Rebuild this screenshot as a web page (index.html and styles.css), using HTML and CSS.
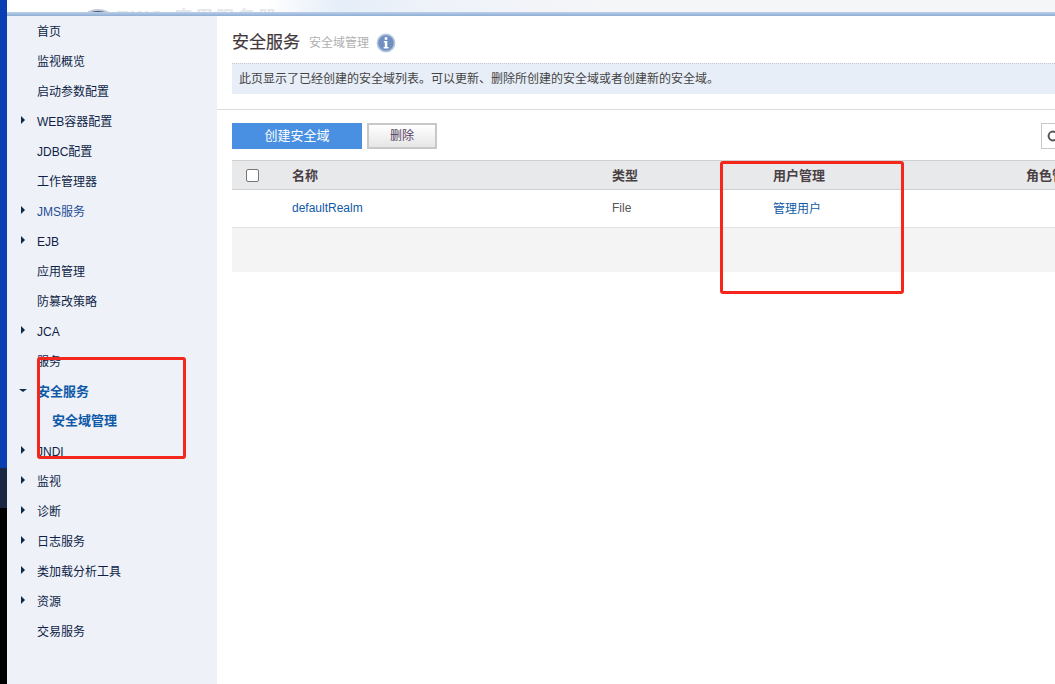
FILE: index.html
```html
<!DOCTYPE html>
<html lang="zh-CN">
<head>
<meta charset="utf-8">
<title>安全域管理</title>
<link rel="stylesheet" href="styles.css">
</head>
<body>
<div class="rail"><div class="rail-blue"></div><div class="rail-navy"></div><div class="rail-black"></div></div>
<div class="page">
  <header class="top">
    <div class="banner"><span class="logo"></span><span class="brand">TWS 应用服务器</span></div>
    <div class="band"></div>
  </header>
  <div class="body">
    <nav class="side">
      <a class="item">首页</a>
      <a class="item">监视概览</a>
      <a class="item">启动参数配置</a>
      <a class="item more">WEB容器配置</a>
      <a class="item">JDBC配置</a>
      <a class="item">工作管理器</a>
      <a class="item more blue">JMS服务</a>
      <a class="item more">EJB</a>
      <a class="item">应用管理</a>
      <a class="item">防篡改策略</a>
      <a class="item more">JCA</a>
      <a class="item">服务</a>
      <a class="item open active">安全服务</a>
      <a class="item sub active">安全域管理</a>
      <a class="item more">JNDI</a>
      <a class="item more">监视</a>
      <a class="item more">诊断</a>
      <a class="item more">日志服务</a>
      <a class="item more">类加载分析工具</a>
      <a class="item more">资源</a>
      <a class="item">交易服务</a>
    </nav>
    <main class="content">
      <div class="head">
        <div class="title-row">
          <h1 class="title">安全服务</h1>
          <span class="subtitle">安全域管理</span>
          <svg class="info" width="20" height="20" viewBox="0 0 20 20" aria-hidden="true">
            <circle cx="10" cy="10" r="8.6" fill="#6f8fc0" stroke="#b4c6e0" stroke-width="1.6"/>
            <rect x="8.7" y="4.2" width="2.6" height="2.6" fill="#fff"/>
            <path d="M7.8 8h3.5v6h1.2v1.4H7.6V14h1.2V9.4h-1z" fill="#fff"/>
          </svg>
        </div>
        <p class="desc">此页显示了已经创建的安全域列表。可以更新、删除所创建的安全域或者创建新的安全域。</p>
      </div>
      <div class="toolbar">
        <button class="btn primary" type="button">创建安全域</button>
        <button class="btn plain" type="button">删除</button>
        <div class="search"><svg width="14" height="14" viewBox="0 0 14 14" aria-hidden="true"><circle cx="7" cy="7" r="4.4" fill="none" stroke="#555" stroke-width="2"/><path d="M10.2 10.2l3 3" stroke="#555" stroke-width="2"/></svg></div>
      </div>
      <table class="grid">
        <colgroup><col class="c1"><col class="c2"><col class="c3"><col class="c4"><col class="c5"></colgroup>
        <thead>
          <tr><th><span class="check"></span></th><th>名称</th><th>类型</th><th>用户管理</th><th>角色管理</th></tr>
        </thead>
        <tbody>
          <tr class="row"><td></td><td><a class="link">defaultRealm</a></td><td class="muted">File</td><td class="cjk"><a class="link">管理用户</a></td><td></td></tr>
          <tr class="foot"><td colspan="5"></td></tr>
        </tbody>
      </table>
    </main>
  </div>
</div>
<div class="mark mark-side"></div>
<div class="mark mark-table"></div>
</body>
</html>
```
FILE: styles.css
```css
* { box-sizing: border-box; }
html, body { height: 100%; margin: 0; overflow: hidden; }
body {
  display: flex;
  font: 12px/1.2 "Liberation Sans", "Noto Sans CJK SC", sans-serif;
  color: #333;
  background: #fff;
}
.rail { width: 7px; flex: none; display: flex; flex-direction: column; }
.rail-blue { height: 468px; background: #0a3fb4; }
.rail-navy { height: 40px; background: #1a2742; }
.rail-black { flex: 1; background: #000; }
.page { flex: 1; min-width: 0; display: flex; flex-direction: column; }
.banner {
  height: 12px;
  overflow: hidden;
  position: relative;
  display: flex;
  align-items: flex-end;
  gap: 6px;
  padding-left: 78px;
  background: linear-gradient(90deg, #fff 0, #fff 260px, #e6eef9 330px, #eef2f9 420px, #f5f6f8 600px);
}
.logo {
  width: 26px;
  height: 14px;
  margin-bottom: -11px;
  border-radius: 50%;
  border: 2px solid #c4cbd6;
  background: #44597c;
}
.brand {
  margin-bottom: -15px;
  font-size: 18px;
  line-height: 18px;
  letter-spacing: 3px;
  font-weight: 700;
  color: #e4e7ec;
  white-space: nowrap;
}
.band { height: 4px; background: linear-gradient(#bcd0e8, #8fadd4); }
.body { flex: 1; min-height: 0; display: flex; }
.side { width: 210px; flex: none; background: #eef1f7; }
.item {
  display: block;
  position: relative;
  height: 30px;
  line-height: 32px;
  padding-left: 30px;
  color: #0f1f47;
}
.item.blue { color: #1f4f96; }
.item.active { color: #0f5aa8; font-weight: 700; }
.item.sub { padding-left: 45px; font-size: 13px; line-height: 30px; }
.item.open { font-size: 13px; }
.more::before, .open::before { content: ""; position: absolute; }
.more::before {
  left: 14px;
  top: 10px;
  border-left: 4px solid #0c2c4d;
  border-top: 4px solid transparent;
  border-bottom: 4px solid transparent;
}
.open::before {
  left: 12px;
  top: 13px;
  border-top: 3px solid #0c2c4d;
  border-left: 4px solid transparent;
  border-right: 4px solid transparent;
}
.content { flex: 1; min-width: 0; overflow: hidden; }
.head { height: 94px; padding: 11px 0 0 15px; border-bottom: 1px solid #dcdcdc; }
.title-row { height: 32px; margin-bottom: 4px; display: flex; align-items: center; }
.title { margin: 0; font-size: 17px; font-weight: 400; color: #44383c; -webkit-text-stroke: .2px #44383c; }
.subtitle { margin-left: 9px; color: #b0b0b0; }
.info { margin-left: 7px; }
.desc {
  margin: 0;
  height: 31px;
  line-height: 31px;
  padding-left: 7px;
  background: #e8eef7;
  border-top: 1px dotted #c8ccd2;
  color: #444;
  white-space: nowrap;
}
.toolbar { height: 26px; margin: 13px 0 11px 15px; display: flex; gap: 5px; position: relative; }
.btn { height: 26px; padding: 0; font: inherit; font-size: 13px; border: 0; }
.primary { width: 130px; background: #4a90e2; color: #fff; }
.plain { width: 70px; font-size: 12px; color: #55405f; border: 2px solid #c8c8c8; background: linear-gradient(#fff, #e6e6e6); }
.search {
  margin-left: auto;
  width: 30px;
  margin-right: -16px;
  border: 1px solid #c8c8c8;
  padding: 5px 0 0 4px;
  flex: none;
}
.grid { margin-left: 15px; width: 860px; border-collapse: collapse; table-layout: fixed; }
.c1 { width: 60px; } .c2 { width: 320px; } .c3 { width: 161px; } .c4 { width: 253px; }
.c5 { width: 66px; }
th {
  height: 29px;
  padding: 2px 0 0;
  text-align: left;
  font-size: 13px;
  font-weight: 700;
  color: #4a4044;
  white-space: nowrap;
  overflow: hidden;
  background: #e8e9eb;
  border-top: 1px solid #d0d0d0;
  border-bottom: 1px solid #d0d0d0;
}
.check {
  display: block;
  width: 13px;
  height: 13px;
  margin: -2px 0 0 14px;
  border: 1px solid #777;
  border-radius: 2px;
  background: #fff;
}
td { padding: 0; }
.row td { height: 38px; border-bottom: 1px solid #e2e2e2; }
.row .cjk { padding-top: 2px; }
.foot td { height: 44px; background: #f4f4f4; }
.link { color: #0f5aa8; }
.muted { color: #555; }
.mark {
  position: absolute;
  border: 3px solid #f5261c;
  border-radius: 3px;
  pointer-events: none;
}
.mark-side { left: 37px; top: 357px; width: 149px; height: 102px; }
.mark-table { left: 720px; top: 161px; width: 184px; height: 133px; }
```
